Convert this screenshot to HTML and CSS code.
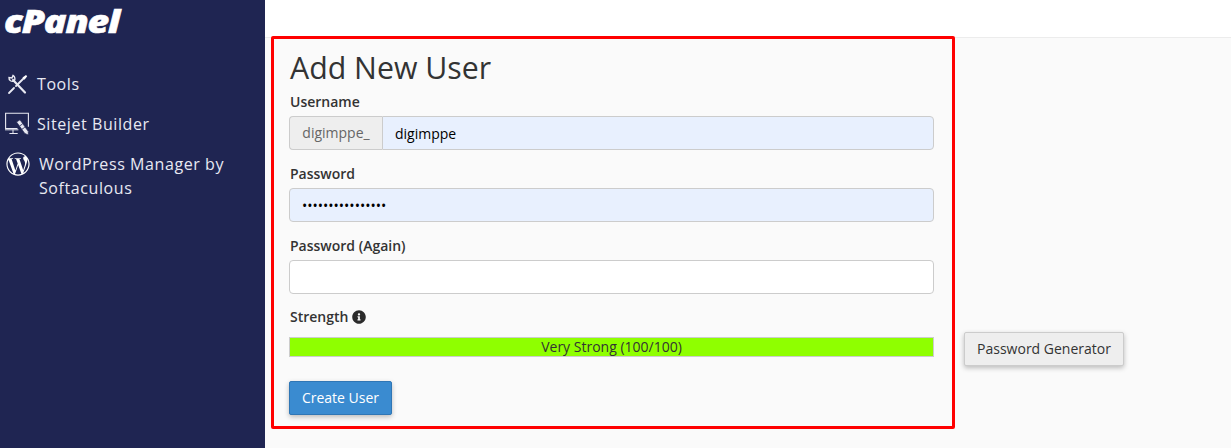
FILE: index.html
```html
<!DOCTYPE html>
<html lang="en">
<head>
<meta charset="utf-8">
<title>Add New User</title>
<link rel="stylesheet" href="styles.css">
</head>
<body>
<div class="app">
  <aside class="sidebar">
    <svg class="logo" viewBox="0 0 130 66"><text class="logo-text" transform="translate(4 33) scale(1.17 1)">cPanel</text></svg>
    <nav class="nav">
      <a class="nav-item">
        <svg class="nav-icon" viewBox="0 0 24 24"><path class="tool-stroke" d="M8 8l12 12.500" stroke-width="2.200"/><path class="tool-stroke" d="M18.500 6.500L11 14M9 16l-5 5" stroke-width="1.800"/><path class="tool-stroke" d="M4 5.500a3.500 3.500 0 0 0 5 3.500 3.500 3.500 0 0 0-1-5.500l-1 2.500z" stroke-width="1.400"/><path class="tool-fill" d="M17.500 5.500L21 3l1.200 1.200L19.500 7.800z"/></svg>
        <span>Tools</span>
      </a>
      <a class="nav-item">
        <svg class="nav-icon" viewBox="0 0 24 23"><path class="screen" d="M12.500 16H.6V.8h22.800v13.500"/><path class="tool-stroke" d="M.3 17.300H13M8 17.500v3M4.800 21h7.500" stroke-width="1"/><path class="pencil" d="M11.500 9.500L15 7.300l8.200 11.500.2 3.700-3.600-1.500z"/><path class="pencil-line" d="M14.500 13.500l3-2M16.800 16.800l3-2"/></svg>
        <span>Sitejet Builder</span>
      </a>
      <a class="nav-item nav-item-wp">
        <svg class="nav-icon" viewBox="0 0 512 512"><path class="tool-fill" d="M256 8C119.3 8 8 119.2 8 256c0 136.7 111.3 248 248 248s248-111.3 248-248C504 119.2 392.7 8 256 8zM33 256c0-32.3 6.9-63 19.3-90.7l106.4 291.4C84.3 420.5 33 344.2 33 256zm223 223c-21.900 0-43-3.200-63-9.100l66.900-194.400 68.500 187.800c.5 1.100 1 2.100 1.600 3.100-23.100 8.100-48 12.600-74 12.600zm30.700-327.500c13.400-.7 25.500-2.100 25.500-2.100 12-1.400 10.600-19.100-1.400-18.400 0 0-36.100 2.800-59.400 2.800-21.900 0-58.700-2.800-58.700-2.800-12-.7-13.400 17.700-1.400 18.400 0 0 11.400 1.400 23.400 2.100l34.700 95.200L200.600 393l-81.200-241.500c13.400-.7 25.500-2.100 25.500-2.100 12-1.400 10.600-19.100-1.400-18.400 0 0-36.100 2.800-59.400 2.800-4.200 0-9.100-.1-14.400-.3C109.600 73 178.100 33 256 33c58 0 110.900 22.200 150.600 58.500-1-.1-1.900-.2-2.900-.2-21.900 0-37.400 19.100-37.400 39.600 0 18.400 10.600 33.900 21.900 52.300 8.500 14.800 18.400 33.900 18.400 61.500 0 19.100-7.300 41.200-17 72.100l-22.200 74.300-80.700-240.100zm81.400 297.200l68.100-196.900c12.700-31.800 17-57.200 17-79.900 0-8.200-.5-15.800-1.500-22.900 17.400 31.800 27.300 68.200 27.300 107 0 82.300-44.600 154.100-110.900 192.700z"/></svg>
        <span>WordPress Manager by Softaculous</span>
      </a>
    </nav>
  </aside>
  <div class="page">
    <header class="topbar"></header>
    <main class="content">
      <form class="card">
        <h1 class="title">Add New User</h1>
        <div class="field">
          <label class="label">Username</label>
          <div class="input-group">
            <span class="addon">digimppe_</span>
            <input class="input input-filled input-joined" type="text" value="digimppe">
          </div>
        </div>
        <div class="field">
          <label class="label">Password</label>
          <input class="input input-filled" type="password" value="aaaaaaaaaaaaaaaa">
        </div>
        <div class="field">
          <label class="label">Password (Again)</label>
          <input class="input" type="password">
        </div>
        <div class="field-strength">
          <div class="label label-strength">Strength
            <svg class="info" viewBox="0 0 512 512"><path d="M256 8C119.043 8 8 119.083 8 256c0 136.997 111.043 248 248 248s248-111.003 248-248C504 119.083 392.957 8 256 8zm0 110c23.196 0 42 18.804 42 42s-18.804 42-42 42-42-18.804-42-42 18.804-42 42-42zm56 254c0 6.627-5.373 12-12 12h-88c-6.627 0-12-5.373-12-12v-24c0-6.627 5.373-12 12-12h12v-64h-12c-6.627 0-12-5.373-12-12v-24c0-6.627 5.373-12 12-12h64c6.627 0 12 5.373 12 12v100h12c6.627 0 12 5.373 12 12v24z"/></svg>
          </div>
          <div class="meter">Very Strong (100/100)</div>
        </div>
        <button class="btn btn-primary" type="button">Create User</button>
      </form>
      <button class="btn btn-default" type="button">Password Generator</button>
    </main>
  </div>
</div>
</body>
</html>
```
FILE: styles.css
```css
* { box-sizing: border-box; }
html, body { margin: 0; height: 100%; }
body {
  font-family: "Open Sans", "Liberation Sans", sans-serif;
  font-size: 14px;
  color: #333;
  background: #fafafa;
  overflow: hidden;
}
.app { display: flex; height: 448px; }
.sidebar {
  width: 265px;
  flex: none;
  background: #1f2552;
  color: #e8e9f2;
}
.logo { display: block; width: 130px; height: 66px; }
.logo-text {
  fill: #fff;
  stroke: #fff;
  stroke-width: .6px;
  font-family: "Open Sans", sans-serif;
  font-size: 32px;
  font-weight: 800;
  font-style: italic;
  letter-spacing: -1px;
}
.nav { display: flex; flex-direction: column; }
.nav-item {
  display: flex;
  align-items: flex-start;
  gap: 8px;
  padding: 6px 30px 6px 5px;
  font-size: 16px;
  line-height: 24px;
  letter-spacing: 0.58px;
  margin-bottom: 4px;
}
.nav-icon { width: 24px; height: 24px; flex: none; }
.nav-item-wp { padding-top: 4px; padding-left: 6px; gap: 9px; margin-top: 2px; }
.tool-stroke { stroke: #e8e9f2; fill: none; stroke-linecap: round; }
.tool-fill { fill: #fff; }
.screen { stroke: #e8e9f2; fill: none; stroke-width: 1.100; }
.pencil { fill: #e8e9f2; stroke: #1f2552; stroke-width: .7; }
.pencil-line { stroke: #1f2552; stroke-width: .8; fill: none; }
.page { flex: 1; display: flex; flex-direction: column; min-width: 0; }
.topbar {
  height: 38px;
  background: #fff;
  border-bottom: 1px solid #ececec;
  flex: none;
}
.content {
  display: flex;
  align-items: flex-start;
  gap: 9px;
  padding: 0 0 0 6px;
  margin-top: -2px;
}
.card {
  width: 684px;
  height: 393px;
  border: 3px solid #f00;
  border-radius: 2px;
  padding: 7px 18px 0 15px;
  flex: none;
}
.title {
  margin: 0 0 3px 1px;
  font-size: 30.300px;
  font-weight: 400;
  line-height: 43px;
  color: #333;
}
.field { margin-bottom: 14px; }
.label {
  display: block;
  height: 20px;
  margin-bottom: 4px;
  padding-left: 1px;
  font-weight: 550;
  line-height: 20px;
  color: #333;
  font-size: 14px;
}
.input-group { display: flex; }
.addon {
  flex: none;
  width: 93px;
  height: 34px;
  border: 1px solid #ccc;
  border-right: 0;
  border-radius: 4px 0 0 4px;
  background: #eee;
  color: #666;
  text-align: center;
  line-height: 32px;
}
.input {
  display: block;
  width: 100%;
  height: 34px;
  padding: 0 12px;
  border: 1px solid #ccc;
  border-radius: 4px;
  background: #fff;
  color: #000;
  font-family: inherit;
  font-size: 14px;
  outline: 0;
}
.input-filled { background: #e8f0fe; }
.input-joined { border-radius: 0 4px 4px 0; }
.field-strength { margin-top: -1px; }
.label-strength { display: flex; align-items: center; gap: 4px; margin-bottom: 10px; }
.info { width: 14px; height: 14px; fill: #2b2b2b; }
.meter {
  height: 20px;
  background: #8fff00;
  border: 1px solid #ccc;
  text-align: center;
  line-height: 18px;
  color: #333;
  font-size: 14px;
}
.btn {
  display: block;
  height: 34px;
  padding: 0 2px 1px;
  border: 1px solid #ccc;
  border-radius: 2px;
  font-family: inherit;
  font-size: 14px;
  white-space: nowrap;
  box-shadow: 0 2px 5px rgba(0, 0, 0, .25);
}
.btn-primary {
  margin-top: 24px;
  width: 103px;
  background: #3a8bd0;
  border-color: #2f76b5;
  color: #fff;
}
.btn-default {
  flex: none;
  width: 160px;
  margin-top: 296px;
  background: #eee;
  color: #333;
}
```
